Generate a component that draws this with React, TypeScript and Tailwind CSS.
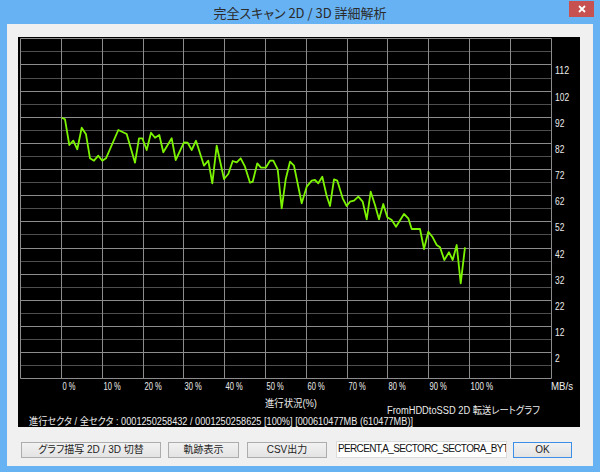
import React from 'react';

const FONT = "'Liberation Sans', 'Noto Sans CJK JP', sans-serif";

// 転送速度の軌跡 (画面座標)
const points: [number, number][] = [
  [61.7, 117.7], [65, 119.3], [69.3, 145], [73.3, 140.7], [77.3, 149.3], [81.7, 127.7],
  [86, 134.3], [90, 158.3], [94, 160.7], [98.3, 155.7], [102.3, 160.7], [106, 158.3],
  [118.3, 130], [126.7, 134], [135, 162.7], [139, 138.3], [142.3, 138.3], [146.7, 150],
  [151, 132.7], [155, 137.7], [159.3, 135], [163.3, 152.3], [171.7, 138.3], [175.7, 160],
  [184, 142.3], [187.7, 142.7], [191.7, 150], [196, 140.7], [204, 165.7], [208.3, 160.7],
  [212.3, 183.3], [216.7, 145.7], [224, 179], [228.3, 174], [232.7, 161], [236.7, 162.3],
  [240.7, 158.3], [245, 166.7], [250, 182.7], [252.7, 181.7], [257.3, 163.3], [261, 167.7],
  [265.7, 167.7], [270, 160.7], [273.3, 160.7], [277.7, 169.3], [281.7, 208.3], [285.7, 179.3],
  [290, 161.7], [294, 165.7], [301.7, 203.3], [306.7, 186.7], [311.7, 180.7], [315, 180],
  [318.3, 183.3], [322.3, 176.7], [326.7, 196], [330, 206], [334, 179.3], [337.3, 180.7],
  [342.7, 198.3], [346.7, 206], [350, 201.7], [354, 200.7], [358.3, 196.7], [362.7, 201.7],
  [366.7, 219.3], [370.7, 191.7], [375, 205], [379, 219.3], [383.3, 204], [387.3, 217.3],
  [391.7, 220], [396, 226.7], [404, 214], [408.3, 218.3], [411.7, 229], [420, 229],
  [424, 249], [428.3, 231.7], [432.3, 236.7], [436.7, 245], [440, 247.3], [444.3, 260],
  [449, 252.3], [452.7, 260], [456.7, 245], [460.7, 283.3], [465, 247.3],
];

const xLines = Array.from({ length: 14 }, (_, i) => Math.round(20.2 + 40.8 * i) + 0.5);
const yLines = Array.from({ length: 27 }, (_, j) => Math.round(38.3 + 13.077 * j) + 0.5);

function Label({ x, y, w, children }: { x: number; y: number; w: number; children: string }) {
  return (
    <text
      x={x}
      y={y}
      textLength={w}
      lengthAdjust="spacingAndGlyphs"
      dominantBaseline="central"
      fontSize={10}
      fontFamily={FONT}
      fill="#ececec"
    >
      {children}
    </text>
  );
}

function Chart() {
  return (
    <svg width={562} height={390} viewBox="18 37 562 390" className="block">
      {yLines.map((y, j) => (
        <line key={'h' + j} x1={xLines[0]} x2={xLines[13]} y1={y} y2={y} stroke={j % 2 === 0 ? '#8c8c8c' : '#4e4e4e'} strokeWidth={1} />
      ))}
      {xLines.map((x, i) => (
        <line key={'v' + i} x1={x} x2={x} y1={yLines[0]} y2={yLines[26]} stroke="#8c8c8c" strokeWidth={1} />
      ))}
      <polyline
        points={points.map((p) => p.join(',')).join(' ')}
        fill="none"
        stroke="#7cf400"
        strokeWidth={1.8}
        strokeLinejoin="round"
      />
      {Array.from({ length: 12 }, (_, k) => {
        const v = 112 - 10 * k;
        const s = String(v);
        return (
          <Label key={'y' + k} x={555} y={yLines[2 + 2 * k] + 5.5} w={s.length * 4.7}>
            {s}
          </Label>
        );
      })}
      {Array.from({ length: 11 }, (_, i) => {
        const s = `${i * 10} %`;
        return (
          <Label key={'x' + i} x={xLines[i + 1] + 1} y={386} w={i === 0 ? 13 : i === 10 ? 22.7 : 17.3}>
            {s}
          </Label>
        );
      })}
      <Label x={551} y={386} w={22}>MB/s</Label>
      <Label x={265} y={403} w={52}>進行状況(%)</Label>
      <Label x={387} y={410.7} w={153}>FromHDDtoSSD 2D 転送レートグラフ</Label>
      <Label x={29} y={421.7} w={384}>
        進行セクタ / 全セクタ : 0001250258432 / 0001250258625 [100%] [000610477MB (610477MB)]
      </Label>
    </svg>
  );
}

function Btn({ w, children, primary }: { w: string; children: string; primary?: boolean }) {
  return (
    <button
      className={`${w} h-[16px] flex items-center justify-center border bg-gradient-to-b from-[#f2f2f2] to-[#e3e3e3] text-[10px] leading-none text-[#1e1e1e] ${
        primary ? 'border-[#3c8ee6]' : 'border-[#adadad]'
      }`}
    >
      {children}
    </button>
  );
}

export default function App() {
  return (
    <div
      className="w-[600px] h-[472px] bg-[#66b2f3] flex flex-col px-[7px] pb-[6px] [font-feature-settings:'palt']"
      style={{ fontFamily: FONT }}
    >
      <div className="h-[24px] grid grid-cols-[1fr_auto_1fr] items-start">
        <div />
        <div className="pt-[5px] text-[13px] leading-[15px] text-[#2b2b2b]" style={{ fontFamily: "'Noto Sans CJK JP', sans-serif" }}>
          完全スキャン 2D / 3D 詳細解析
        </div>
        <div className="flex justify-end">
          <div className="mt-[1px] -mr-px w-[25px] h-[16px] bg-[#c75050] flex items-center justify-center">
            <svg width="8" height="8" viewBox="0 0 8 8">
              <path d="M1 1L7 7M7 1L1 7" stroke="#ffffff" strokeWidth="1.8" />
            </svg>
          </div>
        </div>
      </div>
      <div className="flex-1 bg-[#f0f0f0] flex flex-col">
        <div className="ml-[11px] mt-[13px] w-[562px] h-[390px] bg-black">
          <Chart />
        </div>
        <div className="mt-[14px] ml-[14px] flex items-center">
          <Btn w="w-[140px]">グラフ描写 2D / 3D 切替</Btn>
          <div className="ml-[7px]">
            <Btn w="w-[71px]">軌跡表示</Btn>
          </div>
          <div className="ml-[8px]">
            <Btn w="w-[80px]">CSV出力</Btn>
          </div>
          <div className="ml-[9px] w-[171px] h-[17px] bg-white border border-[#dcdcdc] overflow-hidden whitespace-nowrap text-[10px] leading-[11px] tracking-[-0.65px] pl-[1px] pt-[1px] text-[#111]">
            PERCENT,A_SECTORC_SECTORA_BYTE
          </div>
          <div className="ml-[6px]">
            <Btn w="w-[59px]" primary>
              OK
            </Btn>
          </div>
        </div>
      </div>
    </div>
  );
}
